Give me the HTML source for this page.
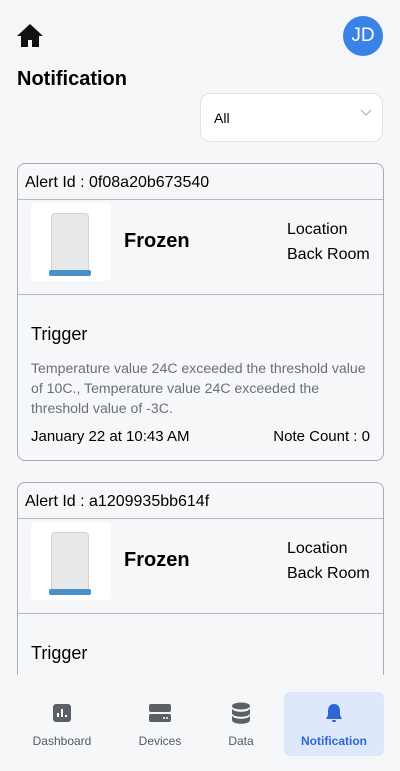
<!DOCTYPE html>
<html><head><meta charset="utf-8"><style>
*{box-sizing:border-box;margin:0;padding:0}
body{width:400px;height:771px;overflow:hidden;background:#f6f7f9;font-family:"Liberation Sans",sans-serif;color:#000;position:relative}
.abs{position:absolute}
.card{position:absolute;left:17px;width:367px;border:1px solid #a9acb2;border-radius:8px;overflow:hidden}
.hdr{height:36px;border-bottom:1px solid #b5b8bd;padding:10px 0 0 7px;font-size:16px}
.row{height:95px;border-bottom:1px solid #b5b8bd;position:relative}
.img{position:absolute;left:13px;top:3px;width:80px;height:78px;background:#fff;border-radius:4px}
.dev{position:absolute;left:20px;top:10px;width:38px;height:60px;background:#e6e8ea;border-radius:4px;border:1px solid #cfd2d5}
.blue{position:absolute;left:18px;top:67px;width:42px;height:6px;background:#4a90c8;border-radius:2px}
.frz{position:absolute;left:106px;top:30px;font-size:20px;font-weight:bold}
.loc{position:absolute;left:269px;top:17px;font-size:16px;line-height:25px}
.nav{position:absolute;top:692px;height:64px;text-align:center;font-size:12px;color:#555a60}
.nav span{position:absolute;left:0;right:0;top:42px}
</style></head><body>
<svg class="abs" style="left:16px;top:23px" width="28" height="25" viewBox="0 0 28 25"><path d="M14 1L1 13h4v11h7v-7h4v7h7V13h4z" fill="#111"/></svg>
<div class="abs" style="left:343px;top:16px;width:40px;height:40px;border-radius:50%;background:#3b82e8;color:#fff;font-size:19px;text-align:center;line-height:40px">JD</div>
<div class="abs" style="left:17px;top:68px;font-size:20px;font-weight:bold">Notification</div>
<div class="abs" style="left:200px;top:93px;width:183px;height:49px;background:#fff;border:1px solid #e0e2e6;border-radius:10px;font-size:14px;padding:16px 0 0 13px">All
<svg class="abs" style="left:159px;top:15px" width="12" height="8"><path d="M1 1l5 5 5-5" stroke="#aaa" fill="none"/></svg></div>

<div class="card" style="top:163px;height:298px">
<div class="hdr">Alert Id : 0f08a20b673540</div>
<div class="row"><div class="img"><div class="dev"></div><div class="blue"></div></div><div class="frz">Frozen</div><div class="loc">Location<br>Back Room</div></div>
<div style="padding:29px 0 0 13px;font-size:18px">Trigger</div>
<div style="padding:13px 10px 0 13px;font-size:14.1px;line-height:20px;color:#6b6f75">Temperature value 24C exceeded the threshold value of 10C., Temperature value 24C exceeded the threshold value of -3C.</div>
<div style="padding:10px 0 0 13px;font-size:15px">January 22 at 10:43 AM<span style="position:absolute;right:13px">Note Count : 0</span></div>
</div>

<div class="card" style="top:482px;height:240px">
<div class="hdr">Alert Id : a1209935bb614f</div>
<div class="row"><div class="img"><div class="dev"></div><div class="blue"></div></div><div class="frz">Frozen</div><div class="loc">Location<br>Back Room</div></div>
<div style="padding:29px 0 0 13px;font-size:18px">Trigger</div>
</div>

<div class="abs" style="left:0;top:675px;width:400px;height:96px;background:#f6f7f9"></div>
<div class="nav" style="left:22px;width:80px"><svg class="abs" style="left:31px;top:12px" width="18" height="18"><rect width="18" height="18" rx="3" fill="#5b5f66"/><path d="M5 13V9M9 13V5M13 13v-2" stroke="#fff" stroke-width="2"/></svg><span>Dashboard</span></div>
<div class="nav" style="left:120px;width:80px"><svg class="abs" style="left:29px;top:12px" width="22" height="18"><rect width="22" height="8" rx="2" fill="#5b5f66"/><rect y="10" width="22" height="8" rx="2" fill="#5b5f66"/><circle cx="15" cy="14" r="1" fill="#fff"/><circle cx="18" cy="14" r="1" fill="#fff"/></svg><span>Devices</span></div>
<div class="nav" style="left:201px;width:80px"><svg class="abs" style="left:30px;top:10px" width="20" height="22"><ellipse cx="10" cy="4" rx="9" ry="3.5" fill="#5b5f66"/><path d="M1 6c0 5 18 5 18 0v5c0 5-18 5-18 0zM1 13c0 5 18 5 18 0v5c0 5-18 5-18 0z" fill="#5b5f66"/></svg><span>Data</span></div>
<div class="nav" style="left:284px;width:100px;background:#dde9fb;border-radius:6px;color:#2e66d6;font-weight:bold"><svg class="abs" style="left:40px;top:11px" width="20" height="21"><path d="M10 1c-4 0-6 3-6 7v4l-2 4h16l-2-4V8c0-4-2-7-6-7z" fill="#2e66d6"/><rect x="8" y="17" width="4" height="2" rx="1" fill="#2e66d6"/></svg><span>Notification</span></div>
</body></html>
